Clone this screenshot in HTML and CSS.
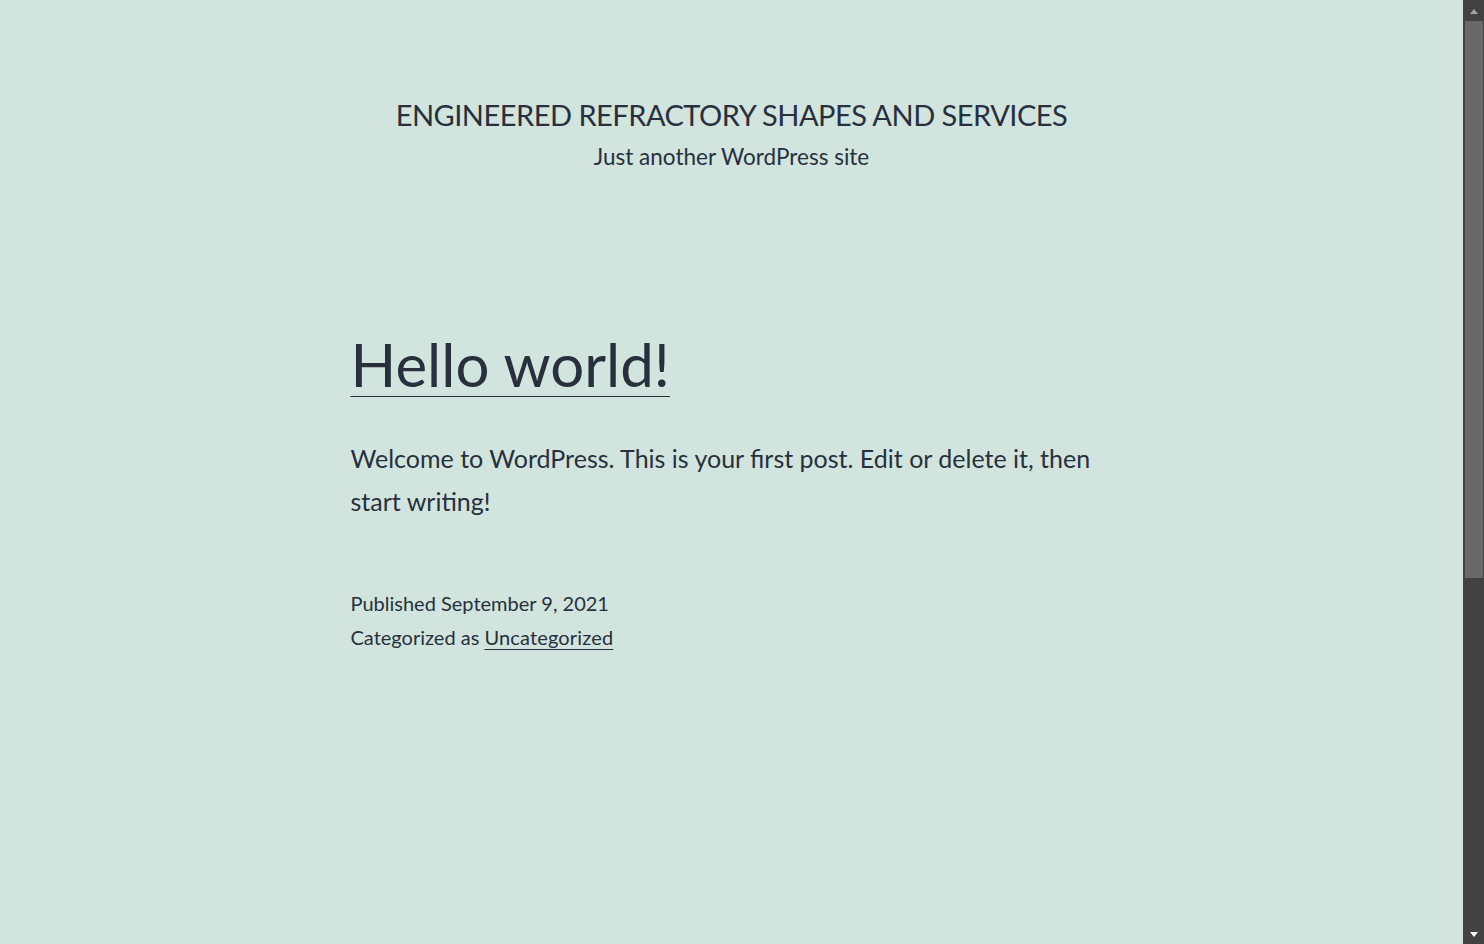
FILE: index.html
```html
<!DOCTYPE html>
<html lang="en">
<head>
<meta charset="utf-8">
<title>Engineered Refractory Shapes and Services</title>
<link rel="stylesheet" href="styles.css">
</head>
<body>
<div class="app">
  <div class="page">
    <header class="site-header">
      <p class="site-title">Engineered Refractory Shapes and Services</p>
      <p class="site-description">Just another WordPress site</p>
    </header>
    <main class="site-main">
      <article class="post">
        <h2 class="entry-title"><a href="#">Hello world!</a></h2>
        <div class="entry-content">
          <p>Welcome to WordPress. This is your first post. Edit or delete it, then start writing!</p>
        </div>
        <footer class="entry-footer">
          <span class="posted-on">Published September 9, 2021</span>
          <span class="cat-links">Categorized as <a href="#">Uncategorized</a></span>
        </footer>
      </article>
    </main>
  </div>
  <div class="scrollbar">
    <div class="sb-btn"><span class="arrow-up"></span></div>
    <div class="sb-track"><div class="sb-thumb"></div></div>
    <div class="sb-btn"><span class="arrow-down"></span></div>
  </div>
</div>
</body>
</html>
```
FILE: styles.css
```css
html, body {
  margin: 0;
  padding: 0;
  height: 100%;
}
body {
  background: #d1e4dd;
  color: #28303d;
  font-family: "Lato", "Liberation Sans", sans-serif;
  overflow: hidden;
}
a { color: #28303d; }
p { margin: 0; }

.app {
  display: flex;
  height: 100vh;
}
.page {
  flex: 1;
  min-width: 0;
  overflow: hidden;
}

.site-header {
  padding-top: 96px;
  text-align: center;
}
.site-title {
  font-size: 29px;
  line-height: 38px;
  letter-spacing: -0.5px;
  text-transform: uppercase;
}
.site-description {
  margin-top: 7px;
  font-size: 22.5px;
  line-height: 31.5px;
}

.site-main {
  display: flex;
  justify-content: center;
  padding-top: 152px;
}
.post {
  width: 764px;
  margin-left: 2px;
}
.entry-title {
  margin: 0;
  font-size: 60px;
  font-weight: 400;
  line-height: 78px;
}
.entry-title a {
  text-decoration: underline;
  text-decoration-thickness: 1px;
  text-underline-offset: 9px;
}
.entry-content {
  margin-top: 34px;
  font-size: 25px;
  line-height: 43px;
}
.entry-footer {
  margin-top: 63px;
  display: flex;
  flex-direction: column;
  font-size: 20px;
  line-height: 34px;
}
.entry-footer a {
  text-decoration-thickness: 1px;
  text-underline-offset: 4px;
  letter-spacing: 0.15px;
}

.scrollbar {
  width: 21px;
  flex: none;
  background: #424242;
  display: flex;
  flex-direction: column;
}
.sb-btn {
  height: 21px;
  flex: none;
  display: flex;
  align-items: center;
  justify-content: center;
}
.sb-track {
  flex: 1;
  padding-left: 2px;
  padding-right: 1px;
}
.sb-thumb {
  height: 557px;
  background: #686868;
}
.arrow-up {
  width: 0;
  height: 0;
  border-left: 4.5px solid transparent;
  border-right: 4.5px solid transparent;
  border-bottom: 5px solid #a3a3a3;
  margin-top: 2px;
  margin-left: 1px;
}
.arrow-down {
  width: 0;
  height: 0;
  border-left: 4.5px solid transparent;
  border-right: 4.5px solid transparent;
  border-top: 5px solid #ffffff;
  margin-top: 2px;
  margin-left: 1px;
}
```
